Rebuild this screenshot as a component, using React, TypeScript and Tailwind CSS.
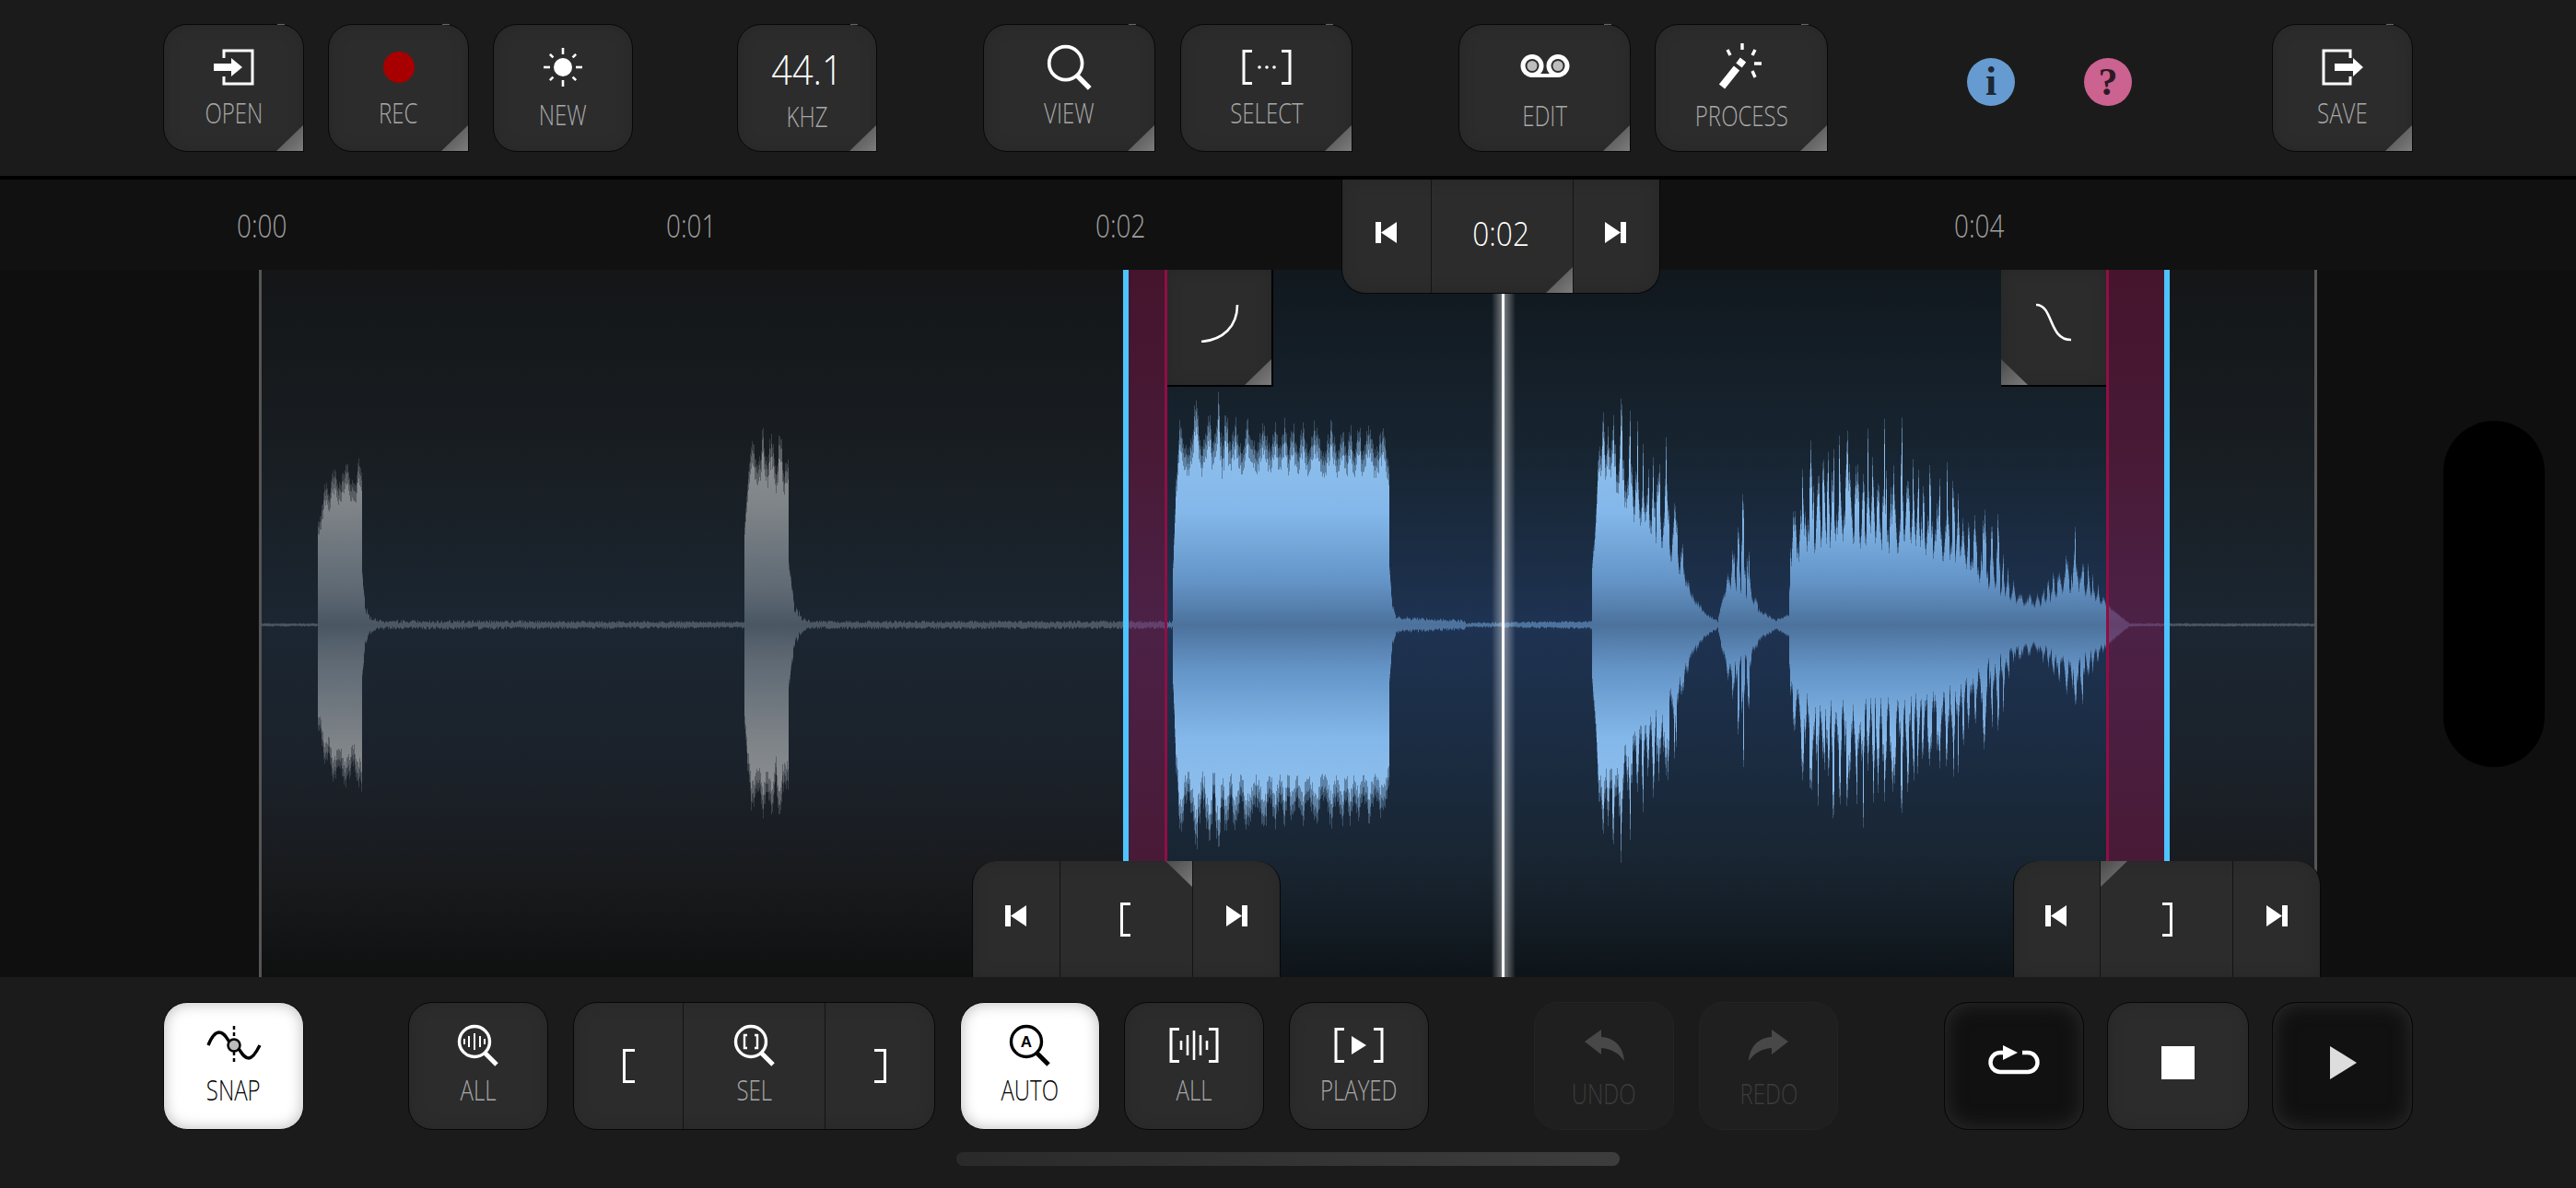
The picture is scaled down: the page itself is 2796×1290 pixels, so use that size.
import type { ReactNode } from "react";

const ENVELOPE: [number, number, number][] = [
  [284, 1, 2], [344, 1, 2], [345, 105, 118], [350, 125, 155], [360, 145, 172], [375, 150, 178], [388, 145, 197], [392, 140, 187],
  [393, 50, 60], [396, 15, 25], [400, 6, 12], [412, 2, 6], [807, 2, 4],
  [808, 110, 120], [811, 150, 170], [815, 165, 205], [830, 170, 220], [845, 160, 220], [848, 160, 240], [855, 150, 205],
  [856, 60, 70], [862, 15, 28], [870, 5, 10], [880, 2, 5], [1272, 2, 5],
  [1273, 70, 80], [1276, 150, 175], [1280, 180, 225], [1295, 180, 245], [1325, 180, 258], [1340, 185, 230], [1500, 180, 220], [1507, 170, 185],
  [1508, 60, 70], [1511, 18, 25], [1515, 6, 10], [1590, 3, 6], [1591, 1, 3], [1727, 3, 5],
  [1728, 60, 71], [1732, 120, 140], [1736, 185, 240], [1755, 150, 285], [1774, 125, 225], [1790, 105, 215], [1808, 80, 255], [1820, 65, 145],
  [1828, 50, 72], [1836, 30, 38], [1850, 12, 15], [1864, 3, 5], [1870, 30, 37], [1877, 45, 75], [1894, 30, 198], [1900, 28, 65], [1908, 15, 20],
  [1927, 4, 6], [1941, 10, 14], [1943, 60, 150], [1953, 75, 170], [1965, 85, 245], [2010, 90, 240], [2068, 85, 235], [2087, 80, 195], [2126, 70, 188],
  [2134, 60, 135], [2165, 35, 155], [2184, 25, 50], [2210, 20, 36], [2252, 40, 112], [2279, 25, 42], [2286, 22, 24], [2310, 2, 3], [2311, 1, 2], [2512, 1, 2],
];

function envelopeAt(x: number) {
  for (let i = 1; i < ENVELOPE.length; i++) {
    const [x1, b1, p1] = ENVELOPE[i];
    if (x <= x1) {
      const [x0, b0, p0] = ENVELOPE[i - 1];
      const t = (x - x0) / (x1 - x0 || 1);
      return [b0 + (b1 - b0) * t, p0 + (p1 - p0) * t];
    }
  }
  return [1, 2];
}

function buildWave() {
  let seed = 20240611;
  const rand = () => {
    seed = (seed + 0x6d2b79f5) | 0;
    let t = Math.imul(seed ^ (seed >>> 15), 1 | seed);
    t = (t + Math.imul(t ^ (t >>> 7), 61 | t)) ^ t;
    return ((t ^ (t >>> 14)) >>> 0) / 4294967296;
  };
  const blue = ["", "", ""];
  const gray = ["", "", ""];
  const cy = 678.5;
  const amp = (x: number, body: number, peak: number) => {
    if (peak < 30) return body + (peak - body) * rand();
    const comb = x < 860 || (x >= 1273 && x < 1510);
    const wob = 0.5 + 0.5 * Math.sin(x * 0.52 + 2 * Math.sin(x * 0.09));
    if (comb) return body + (peak - body) * Math.pow(0.6 * wob + 0.4 * rand(), 1.3);
    // speech part: narrow teeth with deep slits between them
    const phase = (x + 2.5 * Math.sin(x * 0.13)) % 7;
    const tooth = 1 - Math.abs(phase - 3.5) / 3.5;
    return body + (peak - body) * Math.pow(0.65 * tooth + 0.35 * rand(), 1.7);
  };
  for (let x = 284; x < 2512; x++) {
    if ((x >= 1219 && x < 1225) || (x >= 2349 && x < 2355)) continue;
    const [body, peak] = envelopeAt(x);
    const top = amp(x, body, peak);
    const bot = amp(x, body, peak);
    const px = x + 0.5;
    const out = x >= 1225 && x < 2349 ? blue : gray;
    out[0] += `M${px} ${(cy - top * 0.88).toFixed(1)}V${(cy + bot * 0.88).toFixed(1)}`;
    out[1] += `M${px} ${(cy - top * 0.95).toFixed(1)}V${(cy - top * 0.88).toFixed(1)}M${px} ${(cy + bot * 0.88).toFixed(1)}V${(cy + bot * 0.95).toFixed(1)}`;
    out[2] += `M${px} ${(cy - top).toFixed(1)}V${(cy - top * 0.95).toFixed(1)}M${px} ${(cy + bot * 0.95).toFixed(1)}V${(cy + bot).toFixed(1)}`;
  }
  return { blue, gray };
}

const wave = buildWave();

function Corner({ className }: { className: string }) {
  return <span className={`absolute h-[28px] w-[29px] bg-[linear-gradient(135deg,#4a4a4a,#7c7c7c)] ${className}`} />;
}

const brCorner = "right-0 bottom-0 [clip-path:polygon(100%_0,100%_100%,0_100%)]";

function Cond({ children, className = "scale-x-[0.75]" }: { children: ReactNode; className?: string }) {
  return <span className={`inline-block whitespace-nowrap font-light ${className}`}>{children}</span>;
}

type BtnProps = {
  label?: string;
  children: ReactNode;
  tri?: boolean;
  tone?: "normal" | "white" | "dark" | "off";
  className?: string;
  slot?: string;
  text?: string;
};

function Btn({ label, children, tri, tone = "normal", className = "w-[152px]", slot = "mt-[6px] h-[80px]", text = "-mt-[3px]" }: BtnProps) {
  const tones = {
    normal: "border-[#070707] bg-[#2c2c2c] shadow-[inset_0_0_14px_#272727] text-[#a8a8a8]",
    white: "border-[#070707] bg-white shadow-[inset_0_0_16px_#b9b9b9] text-black",
    dark: "border-[#070707] bg-[#111111] shadow-[inset_0_0_22px_#2c2c2c]",
    off: "border-[#232323] bg-[#1f1f1f] text-[#3c3c3c]",
  };
  return (
    <div className={`relative flex h-[139px] shrink-0 flex-col items-center rounded-[26px] border ${tri ? "rounded-br-none" : ""} ${tones[tone]} ${className}`}>
      <div className={`flex shrink-0 items-center justify-center ${slot}`}>{children}</div>
      {label ? <Cond className={`scale-x-[0.75] text-[32px] leading-[24px] ${text}`}>{label}</Cond> : null}
      {tri ? (
        <>
          <Corner className={brCorner} />
          <span className="absolute -top-px right-[20px] h-px w-[8px] bg-[#666666]" />
        </>
      ) : null}
    </div>
  );
}

function Seg({ children, className }: { children: ReactNode; className: string }) {
  return <div className={`relative flex shrink-0 flex-col items-center ${className}`}>{children}</div>;
}

function PrevIcon() {
  return (
    <svg width="23" height="23" viewBox="0 0 23 23" fill="#fff">
      <rect width="6" height="23" />
      <path d="M6 11.5 23 0v23z" />
    </svg>
  );
}

function NextIcon() {
  return (
    <svg width="23" height="23" viewBox="0 0 23 23" fill="#fff">
      <rect x="17" width="6" height="23" />
      <path d="M17 11.5 0 0v23z" />
    </svg>
  );
}

function OpenIcon() {
  return (
    <svg width="44" height="40" viewBox="0 0 44 40" fill="none">
      <path d="M11 10V2h31v36H11v-8" stroke="#fff" strokeWidth="3" />
      <path d="M0 16h19v-6l12 10-12 10v-6H0z" fill="#fff" />
    </svg>
  );
}

function SaveIcon() {
  return (
    <svg width="46" height="40" viewBox="0 0 46 40" fill="none">
      <path d="M31 10V2H2v36h29v-8" stroke="#fff" strokeWidth="3" />
      <path d="M14 16h20v-6l11 10-11 10v-6H14z" fill="#fff" />
    </svg>
  );
}

function SunIcon() {
  const rays = [0, 45, 90, 135, 180, 225, 270, 315];
  return (
    <svg width="44" height="44" viewBox="-22 -22 44 44">
      <circle r="10" fill="#fff" />
      {rays.map((a) => (
        <line key={a} x1="0" y1={a % 90 === 0 ? -14 : -15} x2="0" y2={a % 90 === 0 ? -21 : -20} stroke="#fff" strokeWidth="2.6" transform={`rotate(${a})`} />
      ))}
    </svg>
  );
}

function Mag({ color = "#fff", children, size = 46 }: { color?: string; children?: ReactNode; size?: number }) {
  return (
    <svg width={size} height={size} viewBox="0 0 46 46" fill="none">
      <circle cx="19" cy="19" r="16.5" stroke={color} strokeWidth="3.4" />
      <path d="M30 31 43 44" stroke={color} strokeWidth="5" />
      {children}
    </svg>
  );
}

function SelectIcon() {
  return (
    <svg width="54" height="38" viewBox="0 0 54 38" fill="none">
      <path d="M11 1.5H2v35h9M43 1.5h9v35h-9" stroke="#fff" strokeWidth="3" />
      <circle cx="19" cy="19" r="1.8" fill="#fff" />
      <circle cx="27" cy="19" r="1.8" fill="#fff" />
      <circle cx="35" cy="19" r="1.8" fill="#fff" />
    </svg>
  );
}

function TapeIcon() {
  return (
    <svg width="54" height="26" viewBox="0 0 54 26">
      <rect x="12" y="21" width="30" height="4" fill="#fff" />
      <circle cx="13" cy="12.5" r="12.5" fill="#fff" />
      <circle cx="41" cy="12.5" r="12.5" fill="#fff" />
      <circle cx="13" cy="12.5" r="7.5" fill="#2c2c2c" />
      <circle cx="41" cy="12.5" r="7.5" fill="#2c2c2c" />
      <circle cx="13" cy="12.5" r="5.5" fill="#bdbdbd" />
      <circle cx="41" cy="12.5" r="5.5" fill="#bdbdbd" />
    </svg>
  );
}

function WandIcon() {
  return (
    <svg width="52" height="52" viewBox="0 0 52 52" fill="none" stroke="#fff">
      <path d="M5 48 21 28M23.500 25 28 19" strokeWidth="8" />
      <path d="M27 1v7M11 8l3 6M41 8l-3 6M40 23h8M38 31l3 7" strokeWidth="3.4" />
    </svg>
  );
}

function SnapIcon() {
  return (
    <svg width="60" height="44" viewBox="0 0 60 44" fill="none" stroke="#000">
      <path d="M30 1v42" strokeWidth="2.5" strokeDasharray="4 3" />
      <path d="M2 22C6 12 10 8 14 8c8 0 10 14 16 14s8 14 16 14c4 0 8-6 12-14" strokeWidth="3.4" />
      <circle cx="30" cy="22" r="6.500" fill="#bbbbbb" strokeWidth="2.5" />
    </svg>
  );
}

function BracketL({ w = 13, stroke = 3 }: { w?: number; stroke?: number }) {
  return (
    <svg width={w} height="37" viewBox={`0 0 ${w} 37`} fill="none">
      <path d={`M${w} 1.500H1.500v34H${w}`} stroke="#fff" strokeWidth={stroke} />
    </svg>
  );
}

function BracketR({ w = 13, stroke = 3 }: { w?: number; stroke?: number }) {
  return (
    <svg width={w} height="37" viewBox={`0 0 ${w} 37`} fill="none">
      <path d={`M0 1.500H${w - 1.5}v34H0`} stroke="#fff" strokeWidth={stroke} />
    </svg>
  );
}

function AllBracketIcon() {
  return (
    <svg width="54" height="38" viewBox="0 0 54 38" fill="none" stroke="#fff">
      <path d="M11 1.500H2v35h9M43 1.500h9v35h-9" strokeWidth="3" />
      <path d="M13 14v10M20 8v22M27 3v32M34 8v22M41 14v10" strokeWidth="2.600" />
    </svg>
  );
}

function PlayedIcon() {
  return (
    <svg width="54" height="38" viewBox="0 0 54 38" fill="none">
      <path d="M11 1.500H2v35h9M43 1.500h9v35h-9" stroke="#fff" strokeWidth="3" />
      <path d="M19 9l16 10-16 10z" fill="#fff" />
    </svg>
  );
}

function UndoIcon({ flip }: { flip?: boolean }) {
  return (
    <svg width="43" height="34" viewBox="0 0 43 34" className={flip ? "-scale-x-100" : ""}>
      <path d="M0 13 18 0v8c16 1 24 12 25 26-6-8-13-13-25-14v7z" fill="#484848" />
    </svg>
  );
}

function LoopIcon() {
  return (
    <svg width="58" height="32" viewBox="0 0 58 32" fill="none">
      <path d="M22 8h-8a10.500 10.500 0 0 0 0 21h30a10.500 10.500 0 0 0 0-21h-6" stroke="#fff" strokeWidth="4.400" />
      <path d="M17 0l16 8-16 8z" fill="#fff" />
    </svg>
  );
}

function Waveform() {
  return (
    <svg className="absolute inset-0" width="2796" height="768" viewBox="0 293 2796 768" fill="none">
      <defs>
        <linearGradient id="wb" gradientUnits="userSpaceOnUse" x1="0" y1="370" x2="0" y2="987">
          <stop offset="0" stopColor="#9fcaf0" />
          <stop offset="0.3" stopColor="#84b8ea" />
          <stop offset="0.42" stopColor="#6595c8" />
          <stop offset="0.5" stopColor="#4c729c" />
          <stop offset="0.58" stopColor="#6595c8" />
          <stop offset="0.7" stopColor="#84b8ea" />
          <stop offset="1" stopColor="#9fcaf0" />
        </linearGradient>
        <linearGradient id="wg" gradientUnits="userSpaceOnUse" x1="0" y1="420" x2="0" y2="937">
          <stop offset="0" stopColor="#9a9da0" />
          <stop offset="0.25" stopColor="#7f8488" />
          <stop offset="0.42" stopColor="#5f6a75" />
          <stop offset="0.5" stopColor="#4a5762" />
          <stop offset="0.58" stopColor="#5f6a75" />
          <stop offset="0.75" stopColor="#7f8488" />
          <stop offset="1" stopColor="#9a9da0" />
        </linearGradient>
      </defs>
      {wave.gray.map((d, i) => (
        <path key={i} d={d} stroke="url(#wg)" strokeOpacity={[1, 0.6, 0.28][i]} />
      ))}
      {wave.blue.map((d, i) => (
        <path key={i} d={d} stroke="url(#wb)" strokeOpacity={[1, 0.6, 0.28][i]} />
      ))}
    </svg>
  );
}

export default function App() {
  const grayBand = "bg-[linear-gradient(to_bottom,#141618,#181d21_25%,#1b2632_50%,#1b2129_72%,#18191b_88%,#0f1010)]";
  const cluster = "absolute flex bg-[#2c2c2c] shadow-[inset_0_0_14px_#272727]";
  const tick = "scale-x-[0.82]";

  return (
    <div className="flex h-[1290px] w-[2796px] flex-col overflow-hidden bg-[#1b1b1b] font-['Open_Sans',sans-serif]">
      <header className="flex h-[195px] shrink-0 items-start border-b-4 border-black pt-[26px] pl-[177px]">
        <Btn label="OPEN" tri className="w-[153px]"><OpenIcon /></Btn>
        <Btn label="REC" tri className="ml-[26px] w-[153px]"><span className="h-[34px] w-[34px] rounded-full bg-[#a80000]" /></Btn>
        <Btn label="NEW" className="ml-[26px] w-[152px]" text="-mt-[1px]"><SunIcon /></Btn>
        <Btn label="KHZ" tri className="ml-[113px] w-[152px]" slot="mt-[6px] h-[84px]" text="-mt-[3px]">
          <Cond className="scale-x-[0.9] text-[44px] leading-none text-white">44.1</Cond>
        </Btn>
        <Btn label="VIEW" tri className="ml-[115px] w-[187px]" slot="mt-[6px] h-[80px]"><Mag size={50} /></Btn>
        <Btn label="SELECT" tri className="ml-[27px] w-[187px]"><SelectIcon /></Btn>
        <Btn label="EDIT" tri className="ml-[115px] w-[187px]" slot="mt-[6px] h-[77px]" text="mt-[3px]"><TapeIcon /></Btn>
        <Btn label="PROCESS" tri className="ml-[26px] w-[188px]" slot="mt-[6px] h-[77px]" text="mt-[3px]"><WandIcon /></Btn>
        <div className="mt-[37px] ml-[151px] flex h-[52px] w-[52px] items-center justify-center rounded-full bg-[#659bd0] font-['Liberation_Serif',serif] text-[44px] leading-none font-bold text-[#1d2833]">i</div>
        <div className="mt-[37px] ml-[75px] flex h-[52px] w-[52px] items-center justify-center rounded-full bg-[#cb6290] font-['Liberation_Serif',serif] text-[42px] leading-none font-bold text-[#2a1a24]">?</div>
        <Btn label="SAVE" tri className="ml-[152px] w-[153px]"><SaveIcon /></Btn>
      </header>

      <main className="relative flex flex-1 flex-col">
        <div className="flex h-[98px] shrink-0 items-center bg-[#111111] pt-[2px] pl-[51px] text-[34px] text-[#a0a0a0]">
          <div className="w-[466px] text-center"><Cond className={tick}>0:00</Cond></div>
          <div className="w-[466px] text-center"><Cond className={tick}>0:01</Cond></div>
          <div className="w-[466px] text-center"><Cond className={tick}>0:02</Cond></div>
          <div className="w-[466px]" />
          <div className="w-[466px] text-center"><Cond className={tick}>0:04</Cond></div>
        </div>

        <div className="relative flex flex-1 bg-[#0f0f0f]">
          <div className="w-[281px] shrink-0" />
          <div className="w-[3px] shrink-0 bg-[#555555]" />
          <div className={`w-[935px] shrink-0 ${grayBand}`} />
          <div className="w-[6px] shrink-0 bg-[#4dc4ff]" />
          <div className="w-[1124px] shrink-0 bg-[linear-gradient(to_bottom,#11181e,#172430_25%,#1e3352_50%,#1b2c42_68%,#182430_85%,#0e1419)]" />
          <div className="w-[6px] shrink-0 bg-[#4dc4ff]" />
          <div className={`w-[157px] shrink-0 ${grayBand}`} />
          <div className="w-[3px] shrink-0 bg-[#555555]" />
          <Waveform />
          <div className="absolute inset-y-0 left-[1225px] w-[42px] border-r-[3px] border-[#8f0f44] bg-[#7a0f3c]/50" />
          <div className="absolute inset-y-0 left-[2286px] w-[63px] border-l-[3px] border-[#8f0f44] bg-[#7a0f3c]/50" />
          <div className="absolute inset-y-0 left-[1619px] w-[26px] bg-[linear-gradient(to_right,transparent,#ffffff66_45%,#ffffff66_55%,transparent)]" />
          <div className="absolute inset-y-0 left-[1630px] w-[3px] bg-white" />
        </div>

        <div className="absolute top-[98px] left-[1267px] flex h-[127px] w-[115px] items-center justify-center border-r-2 border-b-2 border-black bg-[#2c2c2c] shadow-[inset_0_0_14px_#272727]">
          <svg width="42" height="42" viewBox="0 0 42 42" fill="none" className="-mt-[9px]">
            <path d="M1 41C24 39 40 25 40 1" stroke="#fff" strokeWidth="2.600" />
          </svg>
          <Corner className={brCorner} />
        </div>
        <div className="absolute top-[98px] left-[2172px] flex h-[127px] w-[114px] items-center justify-center border-b-2 border-black bg-[#2c2c2c] shadow-[inset_0_0_14px_#272727]">
          <svg width="40" height="42" viewBox="0 0 40 42" fill="none" className="-mt-[11px]">
            <path d="M1 2C20 2 14 40 39 40" stroke="#fff" strokeWidth="2.600" />
          </svg>
          <Corner className="bottom-0 left-0 [clip-path:polygon(0_0,100%_100%,0_100%)]" />
        </div>

        <div className={`${cluster} top-0 left-[1456px] h-[124px] w-[346px] rounded-b-[26px] border-x border-b border-[#070707]`}>
          <Seg className="w-[96px] justify-center pr-[2px] pb-[8px]"><PrevIcon /></Seg>
          <Seg className="w-[155px] justify-center border-x border-[#131313] pr-[2px] pb-[6px] text-white">
            <Cond className="scale-x-[0.88] text-[36px] leading-none">0:02</Cond>
            <Corner className={brCorner} />
          </Seg>
          <Seg className="w-[93px] justify-center pr-[2px] pb-[8px]"><NextIcon /></Seg>
        </div>

        <div className={`${cluster} top-[740px] left-[1055px] h-[126px] w-[335px] rounded-t-[26px] border-x border-[#070707]`}>
          <Seg className="w-[94px] justify-center pr-[2px] pb-[7px]"><PrevIcon /></Seg>
          <Seg className="w-[145px] justify-center border-x border-[#131313] pt-[1px] pr-[2px]">
            <BracketL w={11} />
            <Corner className="top-0 right-0 [clip-path:polygon(0_0,100%_0,100%_100%)]" />
          </Seg>
          <Seg className="w-[94px] justify-center pb-[7px]"><NextIcon /></Seg>
        </div>

        <div className={`${cluster} top-[740px] left-[2185px] h-[126px] w-[334px] rounded-t-[26px] border-x border-[#070707]`}>
          <Seg className="w-[93px] justify-center pr-[2px] pb-[7px]"><PrevIcon /></Seg>
          <Seg className="w-[145px] justify-center border-x border-[#131313] pt-[1px] pl-[2px]">
            <BracketR w={11} />
            <Corner className="top-0 left-0 [clip-path:polygon(0_0,100%_0,0_100%)]" />
          </Seg>
          <Seg className="w-[94px] justify-center pb-[7px]"><NextIcon /></Seg>
        </div>

        <div className="absolute top-[262px] left-[2652px] h-[376px] w-[110px] rounded-[55px] bg-black" />
      </main>

      <footer className="flex h-[229px] shrink-0 flex-col">
        <div className="flex items-start pt-[27px] pl-[177px]">
          <Btn label="SNAP" tone="white" className="w-[153px]" text="-mt-[4px]"><SnapIcon /></Btn>
          <Btn label="ALL" className="ml-[113px] w-[152px]" text="-mt-[4px]">
            <Mag>
              <path d="M8 16v6M13 13v12M19 10v18M25 13v12M30 16v6" stroke="#fff" strokeWidth="2" />
            </Mag>
          </Btn>
          <div className="relative ml-[27px] flex h-[139px] w-[393px] shrink-0 rounded-[26px] border border-[#070707] bg-[#2c2c2c] text-[#a8a8a8] shadow-[inset_0_0_14px_#272727]">
            <Seg className="w-[118px] justify-center"><BracketL /></Seg>
            <Seg className="w-[155px] border-x border-[#131313]">
              <div className="mt-[6px] flex h-[80px] items-center justify-center">
                <Mag>
                  <path d="M15 12h-3v14h3M23 12h3v14h-3" stroke="#fff" strokeWidth="2.400" />
                </Mag>
              </div>
              <Cond className="-mt-[4px] scale-x-[0.75] text-[32px] leading-[24px]">SEL</Cond>
            </Seg>
            <Seg className="w-[118px] justify-center"><BracketR /></Seg>
          </div>
          <Btn label="AUTO" tone="white" className="ml-[27px] w-[152px]" text="-mt-[4px]">
            <Mag color="#000">
              <text x="19" y="25" textAnchor="middle" fontSize="17" fontWeight="700" fill="#000" fontFamily="Liberation Sans, sans-serif">A</text>
            </Mag>
          </Btn>
          <Btn label="ALL" className="ml-[26px] w-[152px]" text="-mt-[4px]"><AllBracketIcon /></Btn>
          <Btn label="PLAYED" className="ml-[27px] w-[152px]" text="-mt-[4px]"><PlayedIcon /></Btn>
          <Btn label="UNDO" tone="off" className="ml-[114px] w-[152px]" text="mt-[0px]"><UndoIcon /></Btn>
          <Btn label="REDO" tone="off" className="ml-[27px] w-[151px]" text="mt-[0px]"><UndoIcon flip /></Btn>
          <Btn tone="dark" className="ml-[115px] w-[152px]" slot="mt-[1px] h-[122px]"><LoopIcon /></Btn>
          <Btn className="ml-[25px] w-[154px]" slot="mt-[4px] h-[122px]"><span className="h-[36px] w-[36px] bg-white" /></Btn>
          <Btn tone="dark" className="ml-[25px] w-[153px]" slot="mt-[4px] h-[122px]">
            <svg width="30" height="36" viewBox="0 0 30 36"><path d="M1 0 30 18 1 36z" fill="#dddddd" /></svg>
          </Btn>
        </div>
        <div className="mx-auto mt-[24px] h-[15px] w-[720px] rounded-full bg-[linear-gradient(to_right,#2a2a2a,#3d3d3d)]" />
      </footer>
    </div>
  );
}
